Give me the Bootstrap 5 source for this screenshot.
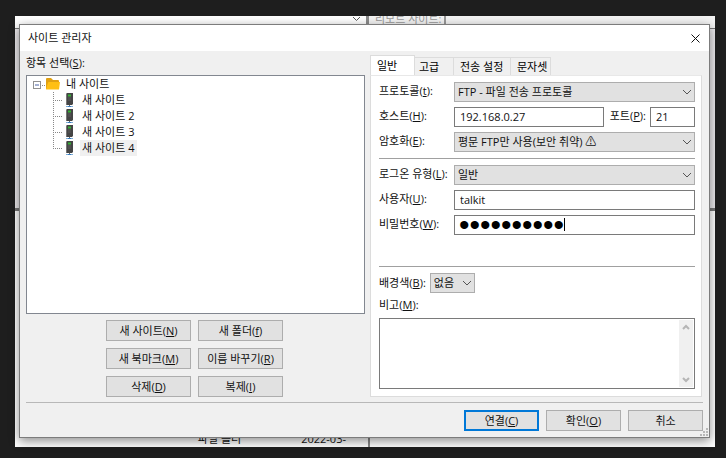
<!DOCTYPE html>
<html lang="ko">
<head>
<meta charset="utf-8">
<meta name="viewport" content="width=device-width, initial-scale=1">
<title>사이트 관리자</title>
<link href="https://cdn.jsdelivr.net/npm/bootstrap@5.3.0/dist/css/bootstrap.min.css" rel="stylesheet">
<style>
  :root { --face: #f0f0f0; --line: #adadad; --edge: #7a7a7a; }
  body { background: #1e1e1e; color: #111; font: 11px/16px "Open Sans", "Noto Sans CJK KR", sans-serif; }
  .desk { min-height: 100vh; padding: 24px 16px 20px 19px; }
  .host-app { inset: 16px 11px 11px 15px; background: #ebe9ec; }
  .host-top { height: 13px; background: #f4f4f4; border-bottom: 1px solid #777; }
  .host-top .combo { width: 354px; background: #fff; border-right: 3px solid #8c8c8c; padding-right: 5px; }
  .host-top .remote { color: #9a9a9a; line-height: 6px; padding: 0 3px 0 6px; border-right: 2px solid #999; }
  .host-mid { height: 182px; border-bottom: 3px solid #777; }
  .host-end { background: #fff; }
  .host-end .files { width: 355px; padding-right: 22px; gap: 60px; border-right: 2px solid #888; }

  .win { background: var(--face); border: 1px solid #7c7c7c; box-shadow: 0 3px 10px rgba(0,0,0,.45); min-height: calc(100vh - 44px); }
  .title { background: #fff; height: 26px; padding: 0 9px 0 8px; }
  .title h1 { font-size: 11px; line-height: 16px; }
  .plain { border: 0; background: none; padding: 0; }
  .content { display: grid; grid-template-columns: 339fr 332fr; gap: 5px; padding: 4px 7px 0 6px; }
  .caption { height: 20px; line-height: 16px; }
  .tree { background: #fff; border: 1px solid #828790; padding: 0 0 0 6px; margin-bottom: 6px; }
  .tree .item { height: 16px; line-height: 16px; }
  .tree .kids { padding-left: 20px; }
  .tree .name { padding: 0 3px 0 2px; margin-left: 4px; }
  .tree .kids .name { margin-left: 7px; }
  .tree .picked { background: var(--face); }
  .actions { display: grid; grid-template-columns: 85px 85px; gap: 7px; padding-right: 2px; }
  .push { height: 21px; padding: 0; border: 1px solid var(--line); border-radius: 0; background: #e1e1e1; color: #111; font-size: 11px; line-height: 16px; }
  .push.main { border: 2px solid #0078d7; }

  .tabs { height: 20px; border: 0; padding-right: 100px; }
  .tabs button { height: 18px; border: 1px solid #dcdcdc; border-bottom: 0; border-left: 0; padding: 0 4px; text-align: left; line-height: 14px; }
  .tabs .on { height: 20px; width: 45px; background: #fff; border-left: 1px solid #dcdcdc; padding: 0 6px; }
  .tabs .t2 { width: 39px; }
  .tabs .t3 { width: 57px; padding-left: 6px; }
  .tabs .t4 { width: 40px; padding: 0 0 0 6px; }
  .sheet { background: #fff; border: 1px solid #dcdcdc; border-top-color: #e8e8e8; padding: 6px 6px 7px 8px; }
  .fields { display: grid; grid-template-columns: 75px 1fr; row-gap: 5px; align-items: center; }
  .fields label { white-space: nowrap; line-height: 18px; padding-bottom: 2px; }
  .form-control.box, .form-select.pick { height: 20px; min-height: 20px; border-radius: 0; font-size: 11px; line-height: 16px; color: #111; }
  .form-control.box { border: 1px solid var(--edge); padding: 0 5px 2px; background: #fff; box-shadow: none; }
  .form-select.pick { border: 1px solid var(--line); padding: 0 18px 1px 3px; background-color: #e1e1e1; background-position: right 2px center; background-size: 10px 10px;
    background-image: url("data:image/svg+xml,%3Csvg xmlns='http://www.w3.org/2000/svg' viewBox='0 0 10 10'%3E%3Cpath d='M1 3l4 4 4-4' fill='none' stroke='%23555'/%3E%3C/svg%3E"); }
  .form-control.secret { font-family: "Liberation Sans", sans-serif; font-size: 30px; line-height: 18px; color: #000; padding: 0 4px; }
  .caret { left: 110px; top: 3px; width: 1px; height: 13px; background: #000; }
  .port { width: 45px; flex: none; }
  .port-label { padding: 0 4px 0 6px; }
  .rule { height: 1px; background: #a0a0a0; }
  .rule.first { margin: 6px 0; }
  .rule.second { margin: auto 0 6px; }
  .color-pick { width: 45px; }
  .memo { height: 71px; border: 1px solid var(--edge); }
  .memo textarea { resize: none; overflow: hidden; outline: 0; }
  .memo .bar { width: 14px; background: var(--face); margin: 1px; padding: 4px 0; }
  .memo-label { height: 21px; margin-top: 4px; }
  .foot { margin: 5px 6px 0; border-top: 1px solid #b8b8b8; padding: 7px 0 6px; gap: 7px; }
  .foot .push { width: 75px; }
  .grip { right: 1px; bottom: 1px; }
</style>
<script src="https://cdn.jsdelivr.net/npm/bootstrap@5.3.0/dist/js/bootstrap.bundle.min.js"></script>
</head>
<body>
<div class="desk position-relative">
  <div class="host-app position-absolute d-flex flex-column overflow-hidden">
    <div class="host-top d-flex flex-shrink-0">
      <div class="combo d-flex justify-content-end"><svg width="9" height="8" viewBox="0 0 9 8" fill="none" stroke="#555"><path d="M1 1l3.500 3.500L8 1"/></svg></div>
      <div class="remote">리모트 사이트:</div>
    </div>
    <div class="host-mid flex-shrink-0"></div>
    <div class="host-end flex-fill d-flex">
      <div class="files d-flex justify-content-end align-items-end"><span>파일 폴더</span><span>2022-03-</span></div>
    </div>
  </div>

  <main class="win position-relative d-flex flex-column">
    <header class="title d-flex align-items-center justify-content-between">
      <h1 class="m-0 fw-normal">사이트 관리자</h1>
      <button type="button" class="plain d-flex" aria-label="닫기"><svg width="9" height="9" viewBox="0 0 9 9" stroke="#111" fill="none"><path d="M.5.5l8 8M8.500.5l-8 8"/></svg></button>
    </header>

    <div class="content flex-fill">
      <section class="d-flex flex-column">
        <div class="caption">항목 선택(<u>S</u>):</div>
        <ul class="tree list-unstyled flex-fill">
          <li>
            <div class="item d-flex align-items-center">
              <svg width="13" height="16" viewBox="0 0 13 16"><rect x=".5" y="5.500" width="7" height="7" fill="#fff" stroke="#919191"/><path d="M2 9h4" stroke="#4b63a7"/><path d="M9 9.500h4" stroke="#888" stroke-dasharray="1 1"/></svg>
              <svg width="14" height="16" viewBox="0 0 14 16"><path d="M0 3q0-1 1-1h4l2 2h5q1 0 1 1v8H0z" fill="#e0a012"/><path d="M0 13.500L2 6.500q0-.5 1-.5h11l-1 7.500z" fill="#ffbf12"/></svg>
              <span class="name">내 사이트</span>
            </div>
            <ul class="list-unstyled kids">
              <li class="item d-flex align-items-center"><svg width="20" height="16" viewBox="0 0 20 16"><path d="M.5 0v16M0 8.500h10" stroke="#888" stroke-dasharray="1 1"/><use href="#server"/></svg><span class="name">새 사이트</span></li>
              <li class="item d-flex align-items-center"><svg width="20" height="16" viewBox="0 0 20 16"><path d="M.5 0v16M0 8.500h10" stroke="#888" stroke-dasharray="1 1"/><use href="#server"/></svg><span class="name">새 사이트 2</span></li>
              <li class="item d-flex align-items-center"><svg width="20" height="16" viewBox="0 0 20 16"><path d="M.5 0v16M0 8.500h10" stroke="#888" stroke-dasharray="1 1"/><use href="#server"/></svg><span class="name">새 사이트 3</span></li>
              <li class="item d-flex align-items-center"><svg width="20" height="16" viewBox="0 0 20 16"><path d="M.5 0v9M0 8.500h10" stroke="#888" stroke-dasharray="1 1"/><use href="#server"/></svg><span class="name picked">새 사이트 4</span></li>
            </ul>
          </li>
        </ul>
        <div class="actions justify-content-center">
          <button type="button" class="btn push">새 사이트(<u>N</u>)</button>
          <button type="button" class="btn push">새 폴더(<u>f</u>)</button>
          <button type="button" class="btn push">새 북마크(<u>M</u>)</button>
          <button type="button" class="btn push">이름 바꾸기(<u>R</u>)</button>
          <button type="button" class="btn push">삭제(<u>D</u>)</button>
          <button type="button" class="btn push">복제(<u>I</u>)</button>
        </div>
      </section>

      <section class="d-flex flex-column">
        <div class="tabs d-flex align-items-end flex-shrink-0" role="tablist">
          <button type="button" role="tab" aria-selected="true" class="plain on">일반</button>
          <button type="button" role="tab" class="plain t2">고급</button>
          <button type="button" role="tab" class="plain t3 text-nowrap">전송 설정</button>
          <button type="button" role="tab" class="plain t4">문자셋</button>
        </div>
        <form class="sheet flex-fill d-flex flex-column">
          <div class="fields">
            <label for="proto">프로토콜(<u>t</u>):</label>
            <select id="proto" class="form-select pick"><option>FTP - 파일 전송 프로토콜</option></select>
            <label for="host">호스트(<u>H</u>):</label>
            <div class="d-flex">
              <input id="host" class="form-control box flex-fill" value="192.168.0.27">
              <label for="port" class="port-label flex-shrink-0">포트(<u>P</u>):</label>
              <input id="port" class="form-control box port" value="21">
            </div>
            <label for="enc">암호화(<u>E</u>):</label>
            <select id="enc" class="form-select pick"><option>평문 FTP만 사용(보안 취약) ⚠</option></select>
          </div>
          <div class="rule first"></div>
          <div class="fields">
            <label for="logon">로그온 유형(<u>L</u>):</label>
            <select id="logon" class="form-select pick"><option>일반</option></select>
            <label for="user">사용자(<u>U</u>):</label>
            <input id="user" class="form-control box" value="talkit">
            <label for="pass">비밀번호(<u>W</u>):</label>
            <div class="position-relative">
              <input id="pass" type="password" class="form-control box secret" value="abcdefghij">
              <span class="caret position-absolute"></span>
            </div>
          </div>
          <div class="rule second"></div>
          <div class="d-flex align-items-center gap-1">
            <label for="tint">배경색(<u>B</u>):</label>
            <select id="tint" class="form-select pick color-pick"><option>없음</option></select>
          </div>
          <label for="memo" class="memo-label">비고(<u>M</u>):</label>
          <div class="memo d-flex">
            <textarea id="memo" class="plain flex-fill"></textarea>
            <div class="bar d-flex flex-column justify-content-between align-items-center">
              <svg width="8" height="6" viewBox="0 0 8 6" fill="none" stroke="#b5b5b5" stroke-width="2"><path d="M1 5l3-3 3 3"/></svg>
              <svg width="8" height="6" viewBox="0 0 8 6" fill="none" stroke="#b5b5b5" stroke-width="2"><path d="M1 1l3 3 3-3"/></svg>
            </div>
          </div>
        </form>
      </section>
    </div>

    <footer class="foot d-flex justify-content-end">
      <button type="button" class="btn push main">연결(<u>C</u>)</button>
      <button type="button" class="btn push">확인(<u>O</u>)</button>
      <button type="button" class="btn push">취소</button>
    </footer>
    <svg class="grip position-absolute" width="8" height="8" viewBox="0 0 8 8" fill="#b8b8b8"><path d="M6 0h2v2H6zM3 3h2v2H3zM6 3h2v2H6zM0 6h2v2H0zM3 6h2v2H3zM6 6h2v2H6z"/></svg>
  </main>
</div>

<svg width="0" height="0" class="position-absolute">
  <symbol id="server" viewBox="0 0 20 16" width="20" height="16">
    <path d="M13 2l1-1h6v11l-1 1h-6z" fill="#454545"/><path d="M13 2h1v11h-1z" fill="#777"/>
    <path d="M15 3.500h3" stroke="#36b336" stroke-width="2"/><path d="M15 6h3M15 8h3" stroke="#5c5c5c"/>
    <path d="M16.500 13v2" stroke="#666"/><path d="M13 14.500h7" stroke="#7cabd6"/><path d="M15 14.500h3" stroke="#377cc0"/>
  </symbol>
</svg>
</body>
</html>
